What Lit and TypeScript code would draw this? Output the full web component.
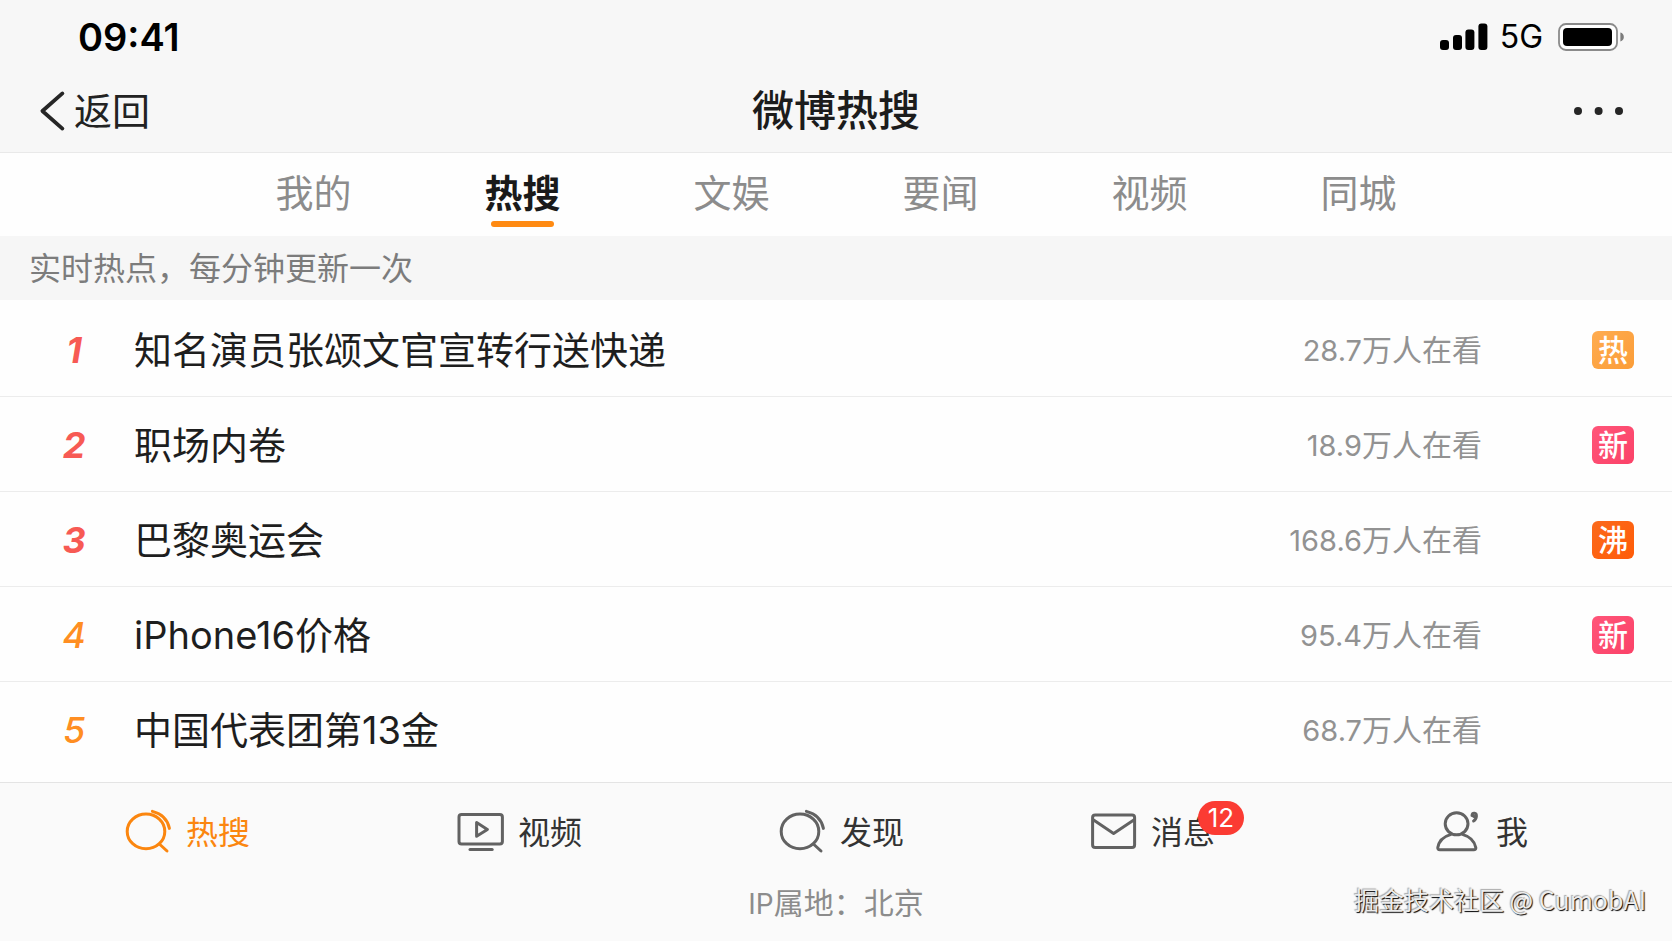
import { LitElement, html, css, nothing, type TemplateResult } from "lit";
import { customElement, property, state } from "lit/decorators.js";
import { classMap } from "lit/directives/class-map.js";

type IconName = "search" | "video" | "mail" | "user";
type TagKind = "hot" | "new" | "boil";

interface Topic {
  title: string;
  heat: string;
  tag?: TagKind;
}

interface NavItem {
  label: string;
  icon: IconName;
  count?: number;
}

const TAG_TEXT: Record<TagKind, string> = { hot: "热", new: "新", boil: "沸" };

const TABS = ["我的", "热搜", "文娱", "要闻", "视频", "同城"];

const TOPICS: Topic[] = [
  { title: "知名演员张颂文官宣转行送快递", heat: "28.7", tag: "hot" },
  { title: "职场内卷", heat: "18.9", tag: "new" },
  { title: "巴黎奥运会", heat: "168.6", tag: "boil" },
  { title: "iPhone16价格", heat: "95.4", tag: "new" },
  { title: "中国代表团第13金", heat: "68.7" },
];

const NAV: NavItem[] = [
  { label: "热搜", icon: "search" },
  { label: "视频", icon: "video" },
  { label: "发现", icon: "search" },
  { label: "消息", icon: "mail", count: 12 },
  { label: "我", icon: "user" },
];

const ICONS: Record<IconName, TemplateResult> = {
  search: html`<svg viewBox="0 0 48 46" aria-hidden="true">
    <ellipse cx="22" cy="23.4" rx="18.8" ry="17.3" />
    <path d="M35.4 36 43 43" />
    <path d="M28.4 3.4C37 5.6 43.6 11.6 45.4 20.4" />
  </svg>`,
  video: html`<svg viewBox="0 0 48 46" aria-hidden="true">
    <rect x="3" y="6.4" width="43.4" height="29.6" rx="2.6" />
    <path d="M20.6 14.6V28.2L31.4 21.4Z" />
    <path d="M14 41.4H36.2" />
  </svg>`,
  mail: html`<svg viewBox="0 0 48 46" aria-hidden="true">
    <rect x="3.6" y="7" width="42" height="32.6" rx="2.6" />
    <path d="M4.6 12 24.6 25.4 44.8 12" />
  </svg>`,
  user: html`<svg viewBox="0 0 48 46" aria-hidden="true">
    <ellipse cx="22.6" cy="15.8" rx="11.4" ry="11" />
    <path d="M16.4 26.6C9.4 28.6 4.8 33.4 3.8 39.6 3.6 41 4.4 41.8 5.8 41.8H39.8C41.2 41.8 42 41 41.8 39.6 40.6 33.4 36 28.6 29 26.6" />
    <path d="M38 7.4C38.4 4.4 42.6 4.6 42.4 8.2 42.2 10.6 41.4 12 39.6 13M38.2 7.2 40 8.4" />
  </svg>`,
};

/* Latin runs are set slightly smaller than the Han characters beside them. */
const mixed = (text: string) =>
  text
    .split(/([A-Za-z0-9.]+)/)
    .filter(Boolean)
    .map((run) => (/^[A-Za-z0-9.]/.test(run) ? html`<span class="latin">${run}</span>` : run));

const base = css`
  * {
    box-sizing: border-box;
  }
  button {
    margin: 0;
    padding: 0;
    border: 0;
    background: none;
    font: inherit;
    color: inherit;
    cursor: pointer;
  }
  a {
    color: inherit;
    text-decoration: none;
  }
`;

@customElement("status-bar")
export class StatusBar extends LitElement {
  static styles = [
    base,
    css`
      :host {
        display: flex;
        align-items: center;
        justify-content: space-between;
        height: 74px;
        padding: 0 48px 0 78px;
        color: #000;
      }
      .time {
        font-size: 38px;
        font-weight: 600;
        line-height: 40px;
      }
      .signals {
        display: flex;
        align-items: center;
      }
      .bars {
        width: 48px;
        height: 28px;
      }
      .network {
        margin: 0 15px 0 12px;
        font-size: 32px;
        line-height: 40px;
      }
      .battery {
        width: 66px;
        height: 30px;
      }
    `,
  ];

  render() {
    return html`
      <span class="time">09:41</span>
      <div class="signals">
        <svg class="bars" viewBox="0 0 48 28" aria-hidden="true">
          <rect x="0" y="17" width="9" height="10" rx="3" />
          <rect x="13" y="12" width="9" height="15" rx="3" />
          <rect x="25.4" y="6.4" width="9" height="20.6" rx="3" />
          <rect x="38.4" y="0.6" width="9" height="26.4" rx="3" />
        </svg>
        <span class="network">5G</span>
        <svg class="battery" viewBox="0 0 66 30" aria-hidden="true">
          <rect x="1" y="2" width="58" height="26" rx="7" fill="#fff" stroke="#8a8a8a" stroke-width="1.8" />
          <rect x="5" y="6" width="49" height="18" rx="4" />
          <path d="M62.4 10.6C67 11.6 67 18.4 62.4 19.4Z" fill="#7c7c7c" />
        </svg>
      </div>
    `;
  }
}

@customElement("page-header")
export class PageHeader extends LitElement {
  @property() heading = "";

  static styles = [
    base,
    css`
      :host {
        display: grid;
        grid-template-columns: 1fr auto 1fr;
        align-items: center;
        height: 79px;
        padding: 0 39px 5px;
        border-bottom: 1px solid #e9e9e9;
        color: #222;
      }
      .back {
        display: flex;
        align-items: center;
        justify-self: start;
        gap: 8px;
        font-size: 38px;
        line-height: 48px;
      }
      .chevron {
        width: 27px;
        height: 42px;
      }
      .heading {
        margin: 0;
        font-size: 42px;
        font-weight: 500;
        line-height: 48px;
        color: #1c1c1c;
      }
      .more {
        display: flex;
        justify-self: end;
        padding-right: 9px;
      }
      .dots {
        width: 52px;
        height: 24px;
      }
    `,
  ];

  render() {
    return html`
      <button class="back" type="button">
        <svg class="chevron" viewBox="0 0 27 42" aria-hidden="true">
          <path d="M23.4 3.4 3.4 21 23.4 38.6" fill="none" stroke="#262626" stroke-width="3.8" stroke-linecap="round" stroke-linejoin="round" />
        </svg>
        <span>返回</span>
      </button>
      <h1 class="heading">${this.heading}</h1>
      <button class="more" type="button" aria-label="更多">
        <svg class="dots" viewBox="0 0 52 24" fill="#262626" aria-hidden="true">
          <circle cx="6" cy="12" r="4" />
          <circle cx="26.6" cy="12" r="4" />
          <circle cx="47" cy="12" r="4" />
        </svg>
      </button>
    `;
  }
}

@customElement("channel-tabs")
export class ChannelTabs extends LitElement {
  @property({ attribute: false }) tabs: string[] = [];
  @state() private active = 1;

  static styles = [
    base,
    css`
      .tabs {
        display: grid;
        grid-auto-columns: 1fr;
        grid-auto-flow: column;
        padding: 0 12.5%;
        background: #fefefe;
      }
      .tab {
        display: flex;
        flex-direction: column;
        align-items: center;
        gap: 4px;
        padding: 16px 0 9px;
        font-size: 38px;
        line-height: 48px;
        color: #8c8c8c;
      }
      .tab::after {
        content: "";
        width: 63px;
        height: 6px;
        border-radius: 3px;
      }
      .active {
        font-weight: 600;
        color: #1a1a1a;
      }
      .active::after {
        background: #ff8a12;
      }
    `,
  ];

  render() {
    return html`<div class="tabs" role="tablist">
      ${this.tabs.map(
        (tab, i) => html`<button
          type="button"
          role="tab"
          aria-selected=${i === this.active ? "true" : "false"}
          class=${classMap({ tab: true, active: i === this.active })}
          @click=${() => (this.active = i)}
        >${tab}</button>`
      )}
    </div>`;
  }
}

@customElement("topic-list")
export class TopicList extends LitElement {
  @property({ attribute: false }) topics: Topic[] = [];

  static styles = [
    base,
    css`
      :host {
        display: block;
        background: #fefefe;
      }
      .list {
        margin: 0;
        padding: 2px 0 0;
        list-style: none;
      }
      .item + .item {
        border-top: 1px solid #ececec;
      }
      .row {
        display: grid;
        grid-template-columns: 72px 1fr auto 42px;
        align-items: center;
        height: 94px;
        padding: 2px 38px 0;
      }
      .rank {
        text-align: center;
        font-size: 36px;
        font-style: italic;
        font-weight: 500;
        line-height: 48px;
        color: #ff8e22;
      }
      .top {
        font-weight: 700;
        color: #f75a54;
      }
      .title {
        padding-left: 24px;
        font-size: 38px;
        line-height: 48px;
        color: #1e1e1e;
      }
      .heat {
        padding-right: 110px;
        font-size: 30px;
        line-height: 48px;
        color: #929292;
      }
      .heat .latin {
        font-size: 29px;
      }
      .tag {
        display: flex;
        align-items: center;
        justify-content: center;
        height: 38px;
        border-radius: 6px;
        font-size: 30px;
        font-weight: 500;
        line-height: 38px;
        color: #fff;
      }
      .hot {
        background: linear-gradient(135deg, #ffac50, #fb9d38);
      }
      .new {
        background: linear-gradient(135deg, #ff5579, #fb4268);
      }
      .boil {
        background: linear-gradient(135deg, #fb6a1c, #ff5c08);
      }
    `,
  ];

  render() {
    return html`<ol class="list">
      ${this.topics.map(
        (topic, i) => html`<li class="item">
          <a class="row" href="#">
            <span class=${classMap({ rank: true, top: i < 3 })}>${i + 1}</span>
            <span class="title">${topic.title}</span>
            <span class="heat">${mixed(`${topic.heat}万人在看`)}</span>
            ${topic.tag
              ? html`<span class=${classMap({ tag: true, [topic.tag]: true })}>${TAG_TEXT[topic.tag]}</span>`
              : nothing}
          </a>
        </li>`
      )}
    </ol>`;
  }
}

@customElement("bottom-nav")
export class BottomNav extends LitElement {
  @property({ attribute: false }) items: NavItem[] = [];
  @state() private active = 0;

  static styles = [
    base,
    css`
      .nav {
        display: grid;
        grid-template-columns: 332fr 322fr 311fr 345fr 238fr;
        align-items: center;
        height: 96px;
        padding-left: 124px;
      }
      .entry {
        position: relative;
        display: flex;
        align-items: center;
        justify-self: start;
        gap: 14px;
        font-size: 32px;
        line-height: 46px;
        color: #333;
      }
      .entry svg {
        width: 48px;
        height: 46px;
        fill: none;
        stroke: #626262;
        stroke-width: 3;
        stroke-linecap: round;
        stroke-linejoin: round;
      }
      .label {
        padding-top: 4px;
      }
      .entry.active {
        color: #fb860f;
      }
      .active svg {
        stroke: #fb860f;
      }
      .count {
        position: absolute;
        top: -5px;
        right: -29px;
        min-width: 46px;
        height: 34px;
        border-radius: 17px;
        background: #fb3b33;
        font-size: 26px;
        line-height: 34px;
        text-align: center;
        color: #fff;
      }
    `,
  ];

  render() {
    return html`<nav class="nav">
      ${this.items.map(
        (item, i) => html`<button
          type="button"
          class=${classMap({ entry: true, active: i === this.active })}
          @click=${() => (this.active = i)}
        >
          ${ICONS[item.icon]}
          <span class="label">${item.label}</span>
          ${item.count ? html`<span class="count">${item.count}</span>` : nothing}
        </button>`
      )}
    </nav>`;
  }
}

@customElement("app-root")
export class AppRoot extends LitElement {
  static styles = [
    base,
    css`
      :host {
        display: flex;
        flex-direction: column;
        min-height: 100vh;
        background: #f7f7f7;
        font-family: Inter, "Noto Sans CJK SC", sans-serif;
      }
      .hint {
        margin: 0;
        padding: 9px 29px 7px;
        background: #f6f6f6;
        font-size: 32px;
        line-height: 48px;
        color: #7c7c7c;
      }
      .topics {
        flex: 1;
      }
      .footer {
        border-top: 1px solid #e4e4e4;
        background: #fafafa;
      }
      .meta {
        display: grid;
        grid-template-columns: 1fr auto 1fr;
        align-items: center;
        padding: 0 26px 13px;
        line-height: 48px;
      }
      .region {
        grid-column: 2;
        font-size: 30px;
        color: #8c8c8c;
      }
      .region .latin {
        font-size: 28px;
      }
      .credit {
        align-self: start;
        justify-self: end;
        font-family: "Noto Sans CJK SC", sans-serif;
        font-size: 25px;
        line-height: 40px;
        color: #ececec;
        text-shadow: 1px 1px 1px #000, -1px -1px 1px #aaa;
      }
    `,
  ];

  render() {
    return html`
      <status-bar></status-bar>
      <page-header heading="微博热搜"></page-header>
      <channel-tabs .tabs=${TABS}></channel-tabs>
      <p class="hint">实时热点，每分钟更新一次</p>
      <topic-list class="topics" .topics=${TOPICS}></topic-list>
      <footer class="footer">
        <bottom-nav .items=${NAV}></bottom-nav>
        <div class="meta">
          <span class="region">${mixed("IP属地：北京")}</span>
          <span class="credit">掘金技术社区 @ CumobAI</span>
        </div>
      </footer>
    `;
  }
}
